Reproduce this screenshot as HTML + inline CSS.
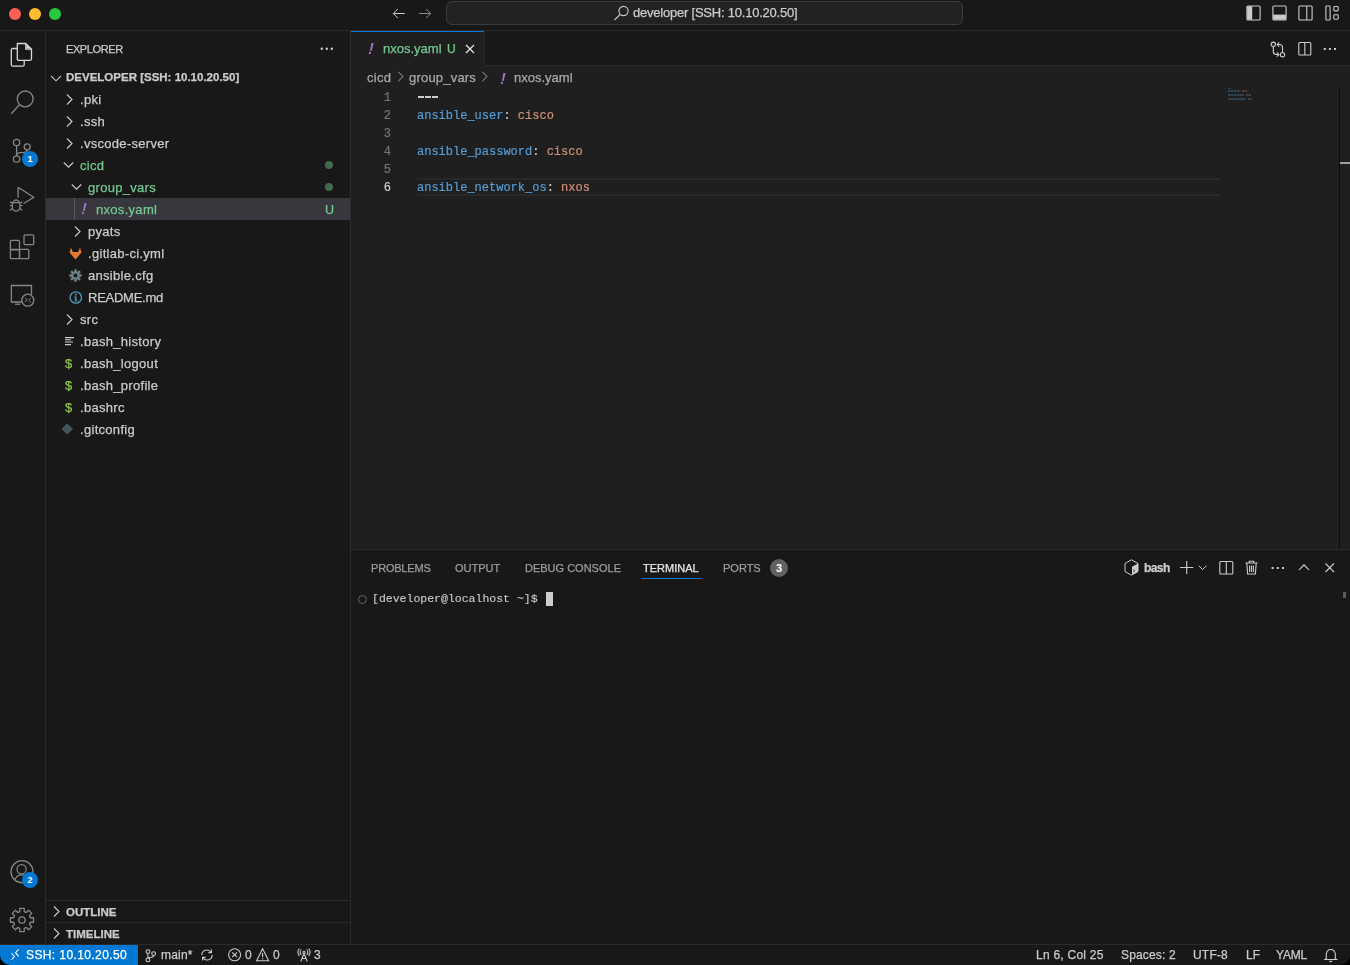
<!DOCTYPE html>
<html><head><meta charset="utf-8">
<style>
*{box-sizing:border-box;margin:0;padding:0}
html,body{width:1350px;height:965px;overflow:hidden;background:#181818;font-family:"Liberation Sans",sans-serif;color:#cccccc;font-size:13px}
div,span{position:absolute}
span.i{position:static}
.t{white-space:nowrap}
.tl{width:12px;height:12px;border-radius:50%;top:8px}
.row{left:46px;width:304px;height:22px;line-height:22px;white-space:nowrap;letter-spacing:0.3px;padding-top:1px}
.mono{font-family:"Liberation Mono",monospace}
.ln{left:351px;width:40px;text-align:right;color:#6e7681;font-size:12px;height:18px;line-height:18px;font-family:"Liberation Mono",monospace}
.code{left:417px;font-size:12px;height:18px;line-height:18px;white-space:pre;font-family:"Liberation Mono",monospace;color:#cccccc}
.k{color:#569cd6;position:static}.s{color:#ce9178;position:static}
svg{position:absolute;overflow:visible}
.g{color:#73c991}
.chev{width:16px;height:16px}
.ptab{top:560px;height:16px;line-height:16px;font-size:11px;color:#9d9d9d;white-space:nowrap}
.sb{top:945px;height:20px;line-height:20px;font-size:12px;color:#cccccc;white-space:nowrap}
.t,.row,.code,.ln,.sb,.ptab{will-change:transform;-webkit-text-stroke:0.25px currentColor}
.code,.ln{-webkit-text-stroke:0.2px currentColor}
</style></head><body>
<!-- title bar -->
<div style="left:0;top:0;width:1350px;height:30px;background:#181818"></div>
<div style="left:0;top:30px;width:1350px;height:1px;background:#2b2b2b"></div>
<div class="tl" style="left:9px;background:#fe5f57"></div>
<div class="tl" style="left:29px;background:#febc2e"></div>
<div class="tl" style="left:49px;background:#28c840"></div>
<svg style="left:391px;top:6px" width="16" height="16" viewBox="0 0 16 16"><path d="M13.8 7.5H2.3M6.8 3L2.3 7.5L6.8 12" fill="none" stroke="#cccccc" stroke-width="1"/></svg>
<svg style="left:417px;top:6px" width="16" height="16" viewBox="0 0 16 16"><path d="M2.2 7.5H13.7M9.2 3L13.7 7.5L9.2 12" fill="none" stroke="#8b8b8b" stroke-width="1"/></svg>
<div style="left:446px;top:1px;width:517px;height:24px;border:1px solid #3c3c3c;border-radius:6px;background:#222222"></div>
<svg style="left:613px;top:4px" width="17" height="17" viewBox="0 0 17 17"><circle cx="10.5" cy="7" r="4.6" fill="none" stroke="#cccccc" stroke-width="1.1"/><path d="M7.2 10.3L1.5 16" stroke="#cccccc" stroke-width="1.1"/></svg>
<div class="t" style="left:633px;top:1px;height:24px;line-height:24px;font-size:13px;color:#cccccc;letter-spacing:-0.22px">developer [SSH: 10.10.20.50]</div>
<!-- layout icons top right -->
<svg style="left:1246px;top:5px" width="15" height="16" viewBox="0 0 15 16"><rect x="0.9" y="1" width="13.2" height="14" rx="1" fill="none" stroke="#cccccc" stroke-width="1.1"/><rect x="1.2" y="1.3" width="5" height="13.4" fill="#cccccc"/></svg>
<svg style="left:1272px;top:5px" width="15" height="16" viewBox="0 0 15 16"><rect x="0.9" y="1" width="13.2" height="14" rx="1" fill="none" stroke="#cccccc" stroke-width="1.1"/><rect x="1.2" y="9.6" width="12.6" height="5.1" fill="#cccccc"/></svg>
<svg style="left:1298px;top:5px" width="15" height="16" viewBox="0 0 15 16"><rect x="0.9" y="1" width="13.2" height="14" rx="1" fill="none" stroke="#cccccc" stroke-width="1.1"/><path d="M8.8 1V15" stroke="#cccccc" stroke-width="1.1"/></svg>
<svg style="left:1325px;top:5px" width="15" height="16" viewBox="0 0 15 16"><rect x="0.9" y="1" width="4.2" height="14" rx="0.8" fill="none" stroke="#cccccc" stroke-width="1.1"/><rect x="8.8" y="1.5" width="4.4" height="4.4" rx="0.9" fill="none" stroke="#cccccc" stroke-width="1.1"/><rect x="8.8" y="9.8" width="4.4" height="4.4" rx="0.9" fill="none" stroke="#cccccc" stroke-width="1.1"/></svg>

<!-- activity bar -->
<div style="left:0;top:31px;width:45px;height:913px;background:#181818"></div>
<div style="left:45px;top:31px;width:1px;height:913px;background:#2b2b2b"></div>


<!-- activity icons -->
<svg style="left:10px;top:42px" width="24" height="26" viewBox="0 0 24 26"><g fill="none" stroke="#d7d7d7" stroke-width="1.3" stroke-linejoin="round"><path d="M7.3 1.5H15.8L21.5 7.2V16.8Q21.5 18.3 20 18.3H8.8Q7.3 18.3 7.3 16.8V3Q7.3 1.5 8.8 1.5Z"/><path d="M15.8 1.5V7.2H21.5"/><path d="M7.3 6.5H2.8Q1.3 6.5 1.3 8V22.7Q1.3 24.2 2.8 24.2H12.7Q14.2 24.2 14.2 22.7V18.3"/></g><path d="M16.4 2.5L20.6 6.6H16.4Z" fill="#d7d7d7"/></svg>
<svg style="left:10px;top:89px" width="24" height="27" viewBox="0 0 24 27"><g fill="none" stroke="#868686" stroke-width="1.3"><circle cx="15.2" cy="9.9" r="7.9"/><path d="M9.6 15.5L1.3 24.8"/></g></svg>
<svg style="left:10px;top:137px" width="24" height="26" viewBox="0 0 24 26"><g fill="none" stroke="#868686" stroke-width="1.3"><circle cx="6.6" cy="5.5" r="3.2"/><circle cx="17.2" cy="9.8" r="3"/><circle cx="6.6" cy="22" r="3.2"/><path d="M6.6 8.7V18.8M17.2 12.8Q17.2 15.5 13.5 15.7H10.5Q7 15.7 6.6 18.5"/></g></svg>
<div style="left:22px;top:151px;width:16px;height:16px;border-radius:50%;background:#0078d4;color:#fff;font-size:9px;font-weight:bold;line-height:16px;text-align:center">1</div>
<svg style="left:8px;top:185px" width="28" height="28" viewBox="0 0 28 28"><g fill="none" stroke="#868686" stroke-width="1.3"><path d="M10.1 2.2L25.7 12.3L15.6 18.5M10.1 2.2V12.8"/><ellipse cx="8.1" cy="20.6" rx="3.9" ry="5.6"/><path d="M4.4 17.6H11.8M1.9 16.8L4.5 18M1.9 20.6H4.2M1.9 25.3L4.5 23.6M14.3 16.8L11.7 18M14.3 20.6H12M14.3 25.3L11.7 23.6"/></g></svg>
<svg style="left:9px;top:233px" width="26" height="26" viewBox="0 0 26 26"><g fill="none" stroke="#868686" stroke-width="1.3"><rect x="1.4" y="7.4" width="9.1" height="9.4" rx="1"/><rect x="1.4" y="16.3" width="9.1" height="9.4" rx="1"/><rect x="10.5" y="16.3" width="9.3" height="9.4" rx="1"/><rect x="15" y="1.9" width="9.7" height="9.8" rx="1.2"/></g></svg>
<svg style="left:9px;top:283px" width="26" height="26" viewBox="0 0 26 26"><g fill="none" stroke="#868686" stroke-width="1.3"><path d="M13.3 19H2.4V2.5H22.5V11.5"/><path d="M6 21.2H11.3"/><circle cx="18.8" cy="17.2" r="6"/><path d="M16.3 14.8L18 16.8L15.8 18.8M21.5 15.3L19.6 17.3L21.8 19.3" stroke-width="1"/></g></svg>
<svg style="left:10px;top:859px" width="24" height="26" viewBox="0 0 24 26"><g fill="none" stroke="#868686" stroke-width="1.3"><circle cx="12" cy="12.7" r="11"/><circle cx="11.6" cy="10.3" r="4.6"/><path d="M4.5 21Q7 15.8 11.6 15.8Q16 15.8 18.5 20"/></g></svg>
<div style="left:22px;top:872px;width:16px;height:16px;border-radius:50%;background:#0078d4;color:#fff;font-size:9px;font-weight:bold;line-height:16px;text-align:center">2</div>
<svg style="left:9px;top:907px" width="26" height="26" viewBox="0 0 26 26"><g fill="none" stroke="#868686" stroke-width="1.3" stroke-linejoin="round"><path d="M10.77 4.69 L10.75 1.42 L15.25 1.42 L15.23 4.69 L17.30 5.55 L19.60 3.22 L22.78 6.40 L20.45 8.70 L21.31 10.77 L24.58 10.75 L24.58 15.25 L21.31 15.23 L20.45 17.30 L22.78 19.60 L19.60 22.78 L17.30 20.45 L15.23 21.31 L15.25 24.58 L10.75 24.58 L10.77 21.31 L8.70 20.45 L6.40 22.78 L3.22 19.60 L5.55 17.30 L4.69 15.23 L1.42 15.25 L1.42 10.75 L4.69 10.77 L5.55 8.70 L3.22 6.40 L6.40 3.22 L8.70 5.55Z"/></g><circle cx="13" cy="13" r="3.2" fill="none" stroke="#868686" stroke-width="1.3"/></svg>

<!-- side bar -->
<div style="left:46px;top:31px;width:304px;height:913px;background:#181818"></div>
<div style="left:350px;top:31px;width:1px;height:913px;background:#2b2b2b"></div>
<div class="t" style="left:66px;top:41px;height:16px;line-height:16px;font-size:11px;color:#cccccc;letter-spacing:-0.4px">EXPLORER</div>
<div class="row" style="top:66px;font-weight:bold;font-size:11.5px;padding-left:20px;color:#cccccc;letter-spacing:0;padding-top:0">DEVELOPER [SSH: 10.10.20.50]</div>


<!-- tree -->
<svg style="left:50px;top:72.5px" width="16" height="10" viewBox="0 0 16 10"><path d="M1 2.8L6 7.8L11 2.8" fill="none" stroke="#cccccc" stroke-width="1.1"/></svg>
<div style="left:46px;top:198px;width:304px;height:22px;background:#37373d"></div>
<div style="left:74px;top:198px;width:1px;height:22px;background:#585858"></div>
<svg style="left:66px;top:94px" width="8" height="12" viewBox="0 0 8 12"><path d="M1 0.5L6 5.5L1 10.5" fill="none" stroke="#cccccc" stroke-width="1.1"/></svg>
<div class="row" style="top:88px;padding-left:34px">.pki</div>
<svg style="left:66px;top:116px" width="8" height="12" viewBox="0 0 8 12"><path d="M1 0.5L6 5.5L1 10.5" fill="none" stroke="#cccccc" stroke-width="1.1"/></svg>
<div class="row" style="top:110px;padding-left:34px">.ssh</div>
<svg style="left:66px;top:138px" width="8" height="12" viewBox="0 0 8 12"><path d="M1 0.5L6 5.5L1 10.5" fill="none" stroke="#cccccc" stroke-width="1.1"/></svg>
<div class="row" style="top:132px;padding-left:34px">.vscode-server</div>
<svg style="left:63px;top:161px" width="12" height="8" viewBox="0 0 12 8"><path d="M0.8 1.5L5.5 6.2L10.2 1.5" fill="none" stroke="#cccccc" stroke-width="1.1"/></svg>
<div class="row g" style="top:154px;padding-left:34px">cicd</div>
<div style="left:325px;top:161px;width:8px;height:8px;border-radius:50%;background:#3f6a4c"></div>
<svg style="left:71px;top:183px" width="12" height="8" viewBox="0 0 12 8"><path d="M0.8 1.5L5.5 6.2L10.2 1.5" fill="none" stroke="#cccccc" stroke-width="1.1"/></svg>
<div class="row g" style="top:176px;padding-left:42px">group_vars</div>
<div style="left:325px;top:183px;width:8px;height:8px;border-radius:50%;background:#3f6a4c"></div>
<svg style="left:81px;top:203px" width="6" height="12" viewBox="0 0 6 12"><path d="M3.4 0H5.6L3.6 8H2Z" fill="#a074c4"/><circle cx="1.9" cy="10" r="1.15" fill="#a074c4"/></svg>
<div class="row g" style="top:198px;padding-left:50px">nxos.yaml</div>
<div class="t g" style="left:325px;top:199px;height:22px;line-height:22px;font-size:12.5px">U</div>
<svg style="left:74px;top:226px" width="8" height="12" viewBox="0 0 8 12"><path d="M1 0.5L6 5.5L1 10.5" fill="none" stroke="#cccccc" stroke-width="1.1"/></svg>
<div class="row" style="top:220px;padding-left:42px">pyats</div>
<svg style="left:69px;top:247px" width="13" height="13" viewBox="0 0 13 13"><path d="M0.5 5.5L2 0.5L3.8 5H9.2L11 0.5L12.5 5.5L6.5 12.5Z" fill="#e37933"/></svg>
<div class="row" style="top:242px;padding-left:42px">.gitlab-ci.yml</div>
<svg style="left:69px;top:269px" width="13" height="13" viewBox="0 0 13 13"><g fill="#6d8086"><circle cx="6.5" cy="6.5" r="4.3"/><rect x="5.3" y="0.2" width="2.4" height="12.6"/><rect x="0.2" y="5.3" width="12.6" height="2.4"/><rect x="5.3" y="0.2" width="2.4" height="12.6" transform="rotate(45 6.5 6.5)"/><rect x="5.3" y="0.2" width="2.4" height="12.6" transform="rotate(-45 6.5 6.5)"/></g><circle cx="6.5" cy="6.5" r="2" fill="#181818"/></svg>
<div class="row" style="top:264px;padding-left:42px">ansible.cfg</div>
<svg style="left:69px;top:291px" width="14" height="14" viewBox="0 0 14 14"><circle cx="6.8" cy="6.5" r="5.7" fill="none" stroke="#519aba" stroke-width="1.3"/><circle cx="6.8" cy="3.6" r="1" fill="#519aba"/><path d="M5.3 5.6H7.6V9.4H8.5V10.2H5.2V9.4H6.1V6.4H5.3Z" fill="#519aba"/></svg>
<div class="row" style="top:286px;padding-left:42px;letter-spacing:-0.25px">README.md</div>
<svg style="left:66px;top:314px" width="8" height="12" viewBox="0 0 8 12"><path d="M1 0.5L6 5.5L1 10.5" fill="none" stroke="#cccccc" stroke-width="1.1"/></svg>
<div class="row" style="top:308px;padding-left:34px">src</div>
<svg style="left:65px;top:337px" width="9" height="9" viewBox="0 0 9 9"><path d="M0 0.6H9M0 2.8H6M0 5H8M0 7.6H6" stroke="#cccccc" stroke-width="1.1"/></svg>
<div class="row" style="top:330px;padding-left:34px">.bash_history</div>
<div class="t" style="left:64px;top:352px;height:22px;line-height:22px;font-size:13px;color:#8dc149;padding-top:1px;left:65px">$</div>
<div class="row" style="top:352px;padding-left:34px">.bash_logout</div>
<div class="t" style="left:64px;top:374px;height:22px;line-height:22px;font-size:13px;color:#8dc149;padding-top:1px;left:65px">$</div>
<div class="row" style="top:374px;padding-left:34px">.bash_profile</div>
<div class="t" style="left:64px;top:396px;height:22px;line-height:22px;font-size:13px;color:#8dc149;padding-top:1px;left:65px">$</div>
<div class="row" style="top:396px;padding-left:34px">.bashrc</div>
<svg style="left:61px;top:423px" width="13" height="12" viewBox="0 0 13 12"><path d="M6.2 0.3L12 6L6.2 11.7L0.5 6Z" fill="#41535b"/></svg>
<div class="row" style="top:418px;padding-left:34px">.gitconfig</div>
<!-- outline / timeline -->
<div style="left:46px;top:900px;width:304px;height:1px;background:#2b2b2b"></div>
<svg style="left:53px;top:906px" width="8" height="12" viewBox="0 0 8 12"><path d="M1 0.5L6 5.5L1 10.5" fill="none" stroke="#cccccc" stroke-width="1.1"/></svg>
<div class="row" style="top:901px;font-weight:bold;font-size:11.5px;padding-left:20px;letter-spacing:0;padding-top:0">OUTLINE</div>
<div style="left:46px;top:922px;width:304px;height:1px;background:#2b2b2b"></div>
<svg style="left:53px;top:928px" width="8" height="12" viewBox="0 0 8 12"><path d="M1 0.5L6 5.5L1 10.5" fill="none" stroke="#cccccc" stroke-width="1.1"/></svg>
<div class="row" style="top:923px;font-weight:bold;font-size:11.5px;padding-left:20px;letter-spacing:0;padding-top:0">TIMELINE</div>
<svg style="left:320px;top:47px" width="14" height="4" viewBox="0 0 14 4"><circle cx="1.8" cy="1.8" r="1.2" fill="#cccccc"/><circle cx="6.8" cy="1.8" r="1.2" fill="#cccccc"/><circle cx="11.8" cy="1.8" r="1.2" fill="#cccccc"/></svg>

<!-- editor -->
<div style="left:351px;top:31px;width:999px;height:518px;background:#1f1f1f"></div>
<div style="left:351px;top:31px;width:999px;height:35px;background:#181818"></div>
<div style="left:351px;top:65px;width:999px;height:1px;background:#2b2b2b"></div>
<div style="left:351px;top:31px;width:133px;height:35px;background:#1f1f1f;border-top:1px solid #0078d4"></div>
<div style="left:484px;top:31px;width:1px;height:34px;background:#2b2b2b"></div>

<div class="ln" style="top:89px">1</div>
<div class="ln" style="top:107px">2</div>
<div class="ln" style="top:125px">3</div>
<div class="ln" style="top:143px">4</div>
<div class="ln" style="top:161px">5</div>
<div class="ln" style="top:179px;color:#cccccc">6</div>
<div style="left:417px;top:178px;width:803px;height:18px;border-top:2px solid #282828;border-bottom:2px solid #282828"></div>
<div style="left:418px;top:96px;width:6px;height:1.6px;background:#cccccc"></div><div style="left:425px;top:96px;width:6px;height:1.6px;background:#cccccc"></div><div style="left:432px;top:96px;width:6px;height:1.6px;background:#cccccc"></div>
<div class="code" style="top:107px"><span class="k">ansible_user</span>: <span class="s">cisco</span></div>
<div class="code" style="top:143px"><span class="k">ansible_password</span>: <span class="s">cisco</span></div>
<div class="code" style="top:179px"><span class="k">ansible_network_os</span>: <span class="s">nxos</span></div>


<!-- tab content -->
<svg style="left:368px;top:43px" width="6" height="12" viewBox="0 0 6 12"><path d="M3.4 0H5.6L3.6 8H2Z" fill="#a074c4"/><circle cx="1.9" cy="10" r="1.15" fill="#a074c4"/></svg>
<div class="t g" style="left:383px;top:31px;height:35px;line-height:35px;font-size:13px">nxos.yaml</div>
<div class="t g" style="left:447px;top:32px;height:35px;line-height:35px;font-size:12px">U</div>
<svg style="left:465px;top:44px" width="10" height="10" viewBox="0 0 10 10"><path d="M1 1L9 9M9 1L1 9" stroke="#e7e7e7" stroke-width="1.2"/></svg>
<!-- editor actions -->
<svg style="left:1270px;top:41px" width="16" height="16" viewBox="0 0 16 16"><g fill="none" stroke="#cccccc" stroke-width="1.1"><circle cx="3.3" cy="3.3" r="2.2"/><circle cx="12.5" cy="13.7" r="2.2"/><path d="M3.3 5.5V10.5Q3.3 13.5 6.3 13.5H8.5M6.8 11.3L8.8 13.5L6.8 15.7"/><path d="M12.5 11.5V6.5Q12.5 3.5 9.5 3.5H7.3M9.2 1.3L7.2 3.5L9.2 5.7"/></g></svg>
<svg style="left:1298px;top:42px" width="14" height="14" viewBox="0 0 14 14"><rect x="0.8" y="0.5" width="12" height="12.5" rx="1" fill="none" stroke="#cccccc" stroke-width="1.1"/><path d="M6.8 0.5V13" stroke="#cccccc" stroke-width="1.1"/></svg>
<svg style="left:1323px;top:48px" width="14" height="3" viewBox="0 0 14 3"><rect x="0.8" y="0" width="2" height="2" fill="#cccccc"/><rect x="5.9" y="0" width="2" height="2" fill="#cccccc"/><rect x="11" y="0" width="2" height="2" fill="#cccccc"/></svg>
<!-- breadcrumbs -->
<div class="t" style="left:367px;top:67px;height:22px;line-height:22px;font-size:13px;color:#a9a9a9;letter-spacing:0.3px">cicd</div>
<svg style="left:397px;top:71px" width="8" height="12" viewBox="0 0 8 12"><path d="M1.3 0.8L6 5.5L1.3 10.2" fill="none" stroke="#a9a9a9" stroke-width="1"/></svg>
<div class="t" style="left:409px;top:67px;height:22px;line-height:22px;font-size:13px;color:#a9a9a9;letter-spacing:0.2px">group_vars</div>
<svg style="left:481px;top:71px" width="8" height="12" viewBox="0 0 8 12"><path d="M1.3 0.8L6 5.5L1.3 10.2" fill="none" stroke="#a9a9a9" stroke-width="1"/></svg>
<svg style="left:500px;top:73px" width="6" height="12" viewBox="0 0 6 12"><path d="M3.4 0H5.6L3.6 8H2Z" fill="#a074c4"/><circle cx="1.9" cy="10" r="1.15" fill="#a074c4"/></svg>
<div class="t" style="left:514px;top:67px;height:22px;line-height:22px;font-size:13px;color:#a9a9a9">nxos.yaml</div>
<!-- minimap --><div style="left:0;top:0;width:1350px;height:965px;opacity:0.6">
<div style="left:1228px;top:88px;width:3px;height:1px;background:#555"></div>
<div style="left:1228px;top:90px;width:12px;height:2px;background:repeating-linear-gradient(90deg,#3a5f7d 0 2px,#2c4456 2px 3px)"></div>
<div style="left:1242px;top:90px;width:5px;height:2px;background:repeating-linear-gradient(90deg,#6f5346 0 2px,#4f3f37 2px 3px)"></div>
<div style="left:1228px;top:94px;width:16px;height:2px;background:repeating-linear-gradient(90deg,#3a5f7d 0 2px,#2c4456 2px 3px)"></div>
<div style="left:1246px;top:94px;width:5px;height:2px;background:repeating-linear-gradient(90deg,#6f5346 0 2px,#4f3f37 2px 3px)"></div>
<div style="left:1228px;top:98px;width:18px;height:2px;background:repeating-linear-gradient(90deg,#3a5f7d 0 2px,#2c4456 2px 3px)"></div>
<div style="left:1248px;top:98px;width:4px;height:2px;background:repeating-linear-gradient(90deg,#6f5346 0 2px,#4f3f37 2px 3px)"></div>
</div>
<!-- scrollbar -->
<div style="left:1339px;top:88px;width:1px;height:461px;background:#0c0c10"></div>
<div style="left:1340px;top:162px;width:10px;height:2px;background:#a0a0a0"></div>

<!-- panel -->
<div style="left:351px;top:549px;width:999px;height:1px;background:#2b2b2b"></div>
<div style="left:351px;top:550px;width:999px;height:394px;background:#181818"></div>
<div class="ptab" style="left:371px;letter-spacing:-0.2px">PROBLEMS</div>
<div class="ptab" style="left:455px">OUTPUT</div>
<div class="ptab" style="left:525px">DEBUG CONSOLE</div>
<div class="ptab" style="left:643px;color:#e7e7e7">TERMINAL</div>
<div class="ptab" style="left:723px">PORTS</div>


<div style="left:642px;top:578px;width:59px;height:1px;background:#0078d4"></div>
<div style="left:770px;top:559px;width:18px;height:18px;border-radius:50%;background:#616161;color:#fff;font-size:11px;line-height:18px;text-align:center;font-weight:bold">3</div>
<svg style="left:1124px;top:559px" width="16" height="17" viewBox="0 0 16 17"><path d="M7.5 0.8L14 4.5V12.5L7.5 16.2L1 12.5V4.5Z" fill="none" stroke="#cccccc" stroke-width="1"/><path d="M8 7.8L14 4.5V12.5L8 16Z" fill="#cccccc"/><path d="M10 10.5V13" stroke="#181818" stroke-width="0.9"/></svg>
<div class="t" style="left:1144px;top:559px;height:18px;line-height:18px;font-size:12px;font-weight:bold;color:#cccccc;letter-spacing:-0.6px">bash</div>
<svg style="left:1180px;top:561px" width="14" height="14" viewBox="0 0 14 14"><path d="M6.7 0V13M0 6.5H13.3" stroke="#cccccc" stroke-width="1.1"/></svg>
<svg style="left:1198px;top:565px" width="10" height="6" viewBox="0 0 10 6"><path d="M0.8 0.8L4.6 4.6L8.4 0.8" fill="none" stroke="#cccccc" stroke-width="1"/></svg>
<svg style="left:1219px;top:561px" width="15" height="14" viewBox="0 0 15 14"><rect x="0.8" y="0.5" width="13" height="12.5" rx="1" fill="none" stroke="#cccccc" stroke-width="1.1"/><path d="M7.3 0.5V13" stroke="#cccccc" stroke-width="1.1"/></svg>
<svg style="left:1245px;top:560px" width="13" height="15" viewBox="0 0 13 15"><g fill="none" stroke="#cccccc" stroke-width="1.1"><path d="M0.5 3H12.5M4.3 3V1.2H8.7V3M1.8 3L2.6 14H10.4L11.2 3M4.6 5.5V12M6.5 5.5V12M8.4 5.5V12"/></g></svg>
<svg style="left:1271px;top:567px" width="14" height="3" viewBox="0 0 14 3"><rect x="0.6" y="0" width="2" height="2" fill="#cccccc"/><rect x="5.8" y="0" width="2" height="2" fill="#cccccc"/><rect x="11" y="0" width="2" height="2" fill="#cccccc"/></svg>
<svg style="left:1298px;top:563px" width="12" height="8" viewBox="0 0 12 8"><path d="M1 6.8L6 1.8L11 6.8" fill="none" stroke="#cccccc" stroke-width="1.1"/></svg>
<svg style="left:1325px;top:563px" width="10" height="10" viewBox="0 0 10 10"><path d="M0.5 0.5L9 9M9 0.5L0.5 9" stroke="#cccccc" stroke-width="1.1"/></svg>
<!-- terminal -->
<div style="left:357.5px;top:594.5px;width:9px;height:9px;border-radius:50%;border:1.3px solid #666"></div>
<div class="t mono" style="left:372px;top:590px;height:17px;line-height:17px;font-size:11.5px;color:#cccccc;-webkit-text-stroke:0.12px currentColor">[developer@localhost ~]$ </div>
<div style="left:546px;top:592px;width:7px;height:14px;background:#cccccc"></div>
<div style="left:1343px;top:592px;width:3px;height:6px;background:#5a5a5a"></div>

<!-- status bar -->
<div style="left:0;top:944px;width:1350px;height:1px;background:#2b2b2b"></div>
<div style="left:0;top:945px;width:1350px;height:20px;background:#181818"></div>
<div style="left:0;top:945px;width:138px;height:20px;background:#0078d4"></div>
<div class="sb" style="left:26px;color:#ffffff;letter-spacing:0.4px">SSH: 10.10.20.50</div>
<svg style="left:10px;top:948px" width="10" height="13" viewBox="0 0 10 13"><path d="M1.4 5.3L4.6 8.4L1.4 11.6M8.6 1.4L5.5 4.7L8.6 8.4" fill="none" stroke="#ffffff" stroke-width="1.1"/></svg>
<svg style="left:144px;top:949px" width="13" height="14" viewBox="0 0 13 14"><g fill="none" stroke="#cccccc" stroke-width="1.1"><circle cx="3.9" cy="2.6" r="1.9"/><circle cx="9.6" cy="4.6" r="1.9"/><circle cx="3.9" cy="10.9" r="1.9"/><path d="M3.9 4.5V9M9.6 6.5Q9.6 8.2 7.5 8.2Q4.5 8.2 3.9 9.2"/></g></svg>
<div class="sb" style="left:161px;letter-spacing:0.2px">main*</div>
<svg style="left:199px;top:948px" width="16" height="14" viewBox="0 0 16 14"><g fill="none" stroke="#cccccc" stroke-width="1.1"><path d="M2.8 7A5 5 0 0 1 12 4.3M13.2 7A5 5 0 0 1 4 9.7"/><path d="M12.4 1.6V4.6H9.4M3.6 12.4V9.4H6.6"/></g></svg>
<svg style="left:228px;top:948px" width="14" height="14" viewBox="0 0 14 14"><g fill="none" stroke="#cccccc" stroke-width="1.1"><circle cx="6.6" cy="6.8" r="6"/><path d="M4.2 4.4L9 9.2M9 4.4L4.2 9.2"/></g></svg>
<div class="sb" style="left:245px">0</div>
<svg style="left:256px;top:948px" width="14" height="14" viewBox="0 0 14 14"><g fill="none" stroke="#cccccc" stroke-width="1.1"><path d="M6.6 0.8L12.6 12.8H0.6Z"/><path d="M6.6 5V9.2M6.6 10.3V11.5"/></g></svg>
<div class="sb" style="left:273px">0</div>
<svg style="left:298px;top:948px" width="14" height="14" viewBox="0 0 14 14"><g fill="none" stroke="#cccccc" stroke-width="1.1"><path d="M6 5.5L2.8 13.5M6 5.5L9.2 13.5M4 10.5H8"/><path d="M3.3 1.5Q1 4 3.3 7M8.7 1.5Q11 4 8.7 7M1.3 0.5Q-1.5 4 1.3 8M10.7 0.5Q13.5 4 10.7 8"/><circle cx="6" cy="4.3" r="1.1"/></g></svg>
<div class="sb" style="left:314px">3</div>
<div class="sb" style="left:1036px;letter-spacing:0.25px">Ln 6, Col 25</div>
<div class="sb" style="left:1121px;letter-spacing:0.15px">Spaces: 2</div>
<div class="sb" style="left:1193px;letter-spacing:0.2px">UTF-8</div>
<div class="sb" style="left:1246px">LF</div>
<div class="sb" style="left:1276px;letter-spacing:-0.2px">YAML</div>
<svg style="left:1324px;top:948px" width="14" height="14" viewBox="0 0 14 14"><g fill="none" stroke="#cccccc" stroke-width="1.1"><path d="M2.3 10.5V6A4.5 4.5 0 0 1 11.3 6V10.5L12.5 11.5H1.1Z"/><path d="M5.3 12.8Q6.8 14.3 8.3 12.8"/></g></svg>


<svg style="left:0;top:955px" width="10" height="10" viewBox="0 0 10 10"><path d="M0 0A10 10 0 0 0 10 10H0Z" fill="#000"/></svg>
<svg style="left:1340px;top:955px" width="10" height="10" viewBox="0 0 10 10"><path d="M10 0A10 10 0 0 1 0 10H10Z" fill="#000"/></svg>
</body></html>
